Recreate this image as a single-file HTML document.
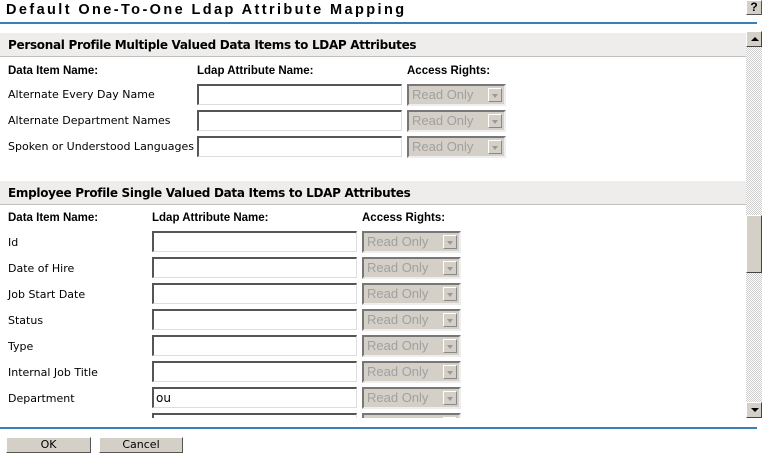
<!DOCTYPE html><html><head><style>
body{margin:0;width:762px;height:453px;background:#fff;position:relative;overflow:hidden;font-family:"DejaVu Sans","Liberation Sans",sans-serif;font-size:11px;color:#000}
.a{position:absolute}
.t{left:6px;top:2px;font:bold 14.5px "Liberation Sans",sans-serif;letter-spacing:2.4px}
.hl{height:2px;background:#3a80b8;left:0;width:757px}
.sh{left:0;width:746px;height:24px;background:#eeedeb;border-bottom:1px solid #c0c0c0;font-weight:bold;font-size:12px;letter-spacing:-0.3px;line-height:25px;padding-left:8px;box-sizing:border-box}
.lb{font:bold 11.5px "Liberation Sans",sans-serif}
.in{height:21px;width:205px;box-sizing:border-box;border:2px solid;border-top-color:#555;border-left-color:#555;border-right:1px solid #ddd;border-bottom:1px solid #ddd;background:#fff;padding-left:2px;line-height:18px;font-size:12px}
.se{height:22px;width:99px;box-sizing:border-box;background:#d4d0c8;border:2px solid;border-color:#777 #eee #eee #777;color:#a0a0a0;font:13px "Liberation Sans",sans-serif;line-height:18px;padding-left:3px}
.se i{position:absolute;right:2px;top:2px;width:14px;height:14px;background:#d4d0c8;border:1px solid;border-color:#fff #888 #888 #fff;box-sizing:border-box}
.se i:after{content:"";position:absolute;left:3px;top:5px;border:3px solid transparent;border-top:4px solid #999;border-bottom:0}
.btn{top:437px;height:16px;background:#d4d0c8;border:1px solid;border-color:#fff #555 #555 #fff;box-sizing:border-box;text-align:center;line-height:14px;font-size:11px}
</style></head><body>
<div class="a t">Default One-To-One Ldap Attribute Mapping</div>
<div class="a" style="left:746px;top:0;width:16px;height:15px;background:#d4d0c8;border:1px solid;border-color:#fff #555 #555 #fff;box-sizing:border-box;font:bold 12px 'Liberation Sans';text-align:center;line-height:13px">?</div>
<div class="a hl" style="top:22px"></div>
<div class="a" style="left:0;top:31px;width:746px;height:387px;overflow:hidden">
<div class="a sh" style="top:2px">Personal Profile Multiple Valued Data Items to LDAP Attributes</div>
<div class="a lb" style="left:8px;top:34px">Data Item Name:</div>
<div class="a lb" style="left:197px;top:34px">Ldap Attribute Name:</div>
<div class="a lb" style="left:407px;top:34px">Access Rights:</div>
<div class="a" style="left:8px;top:57px">Alternate Every Day Name</div>
<div class="a" style="left:8px;top:83px">Alternate Department Names</div>
<div class="a" style="left:8px;top:109px">Spoken or Understood Languages</div>
<div class="a in" style="left:197px;top:53px"></div><div class="a se" style="left:407px;top:53px">Read Only<i></i></div>
<div class="a in" style="left:197px;top:79px"></div><div class="a se" style="left:407px;top:79px">Read Only<i></i></div>
<div class="a in" style="left:197px;top:105px"></div><div class="a se" style="left:407px;top:105px">Read Only<i></i></div>
<div class="a sh" style="top:150px">Employee Profile Single Valued Data Items to LDAP Attributes</div>
<div class="a lb" style="left:8px;top:181px">Data Item Name:</div>
<div class="a lb" style="left:152px;top:181px">Ldap Attribute Name:</div>
<div class="a lb" style="left:362px;top:181px">Access Rights:</div>
<div class="a" style="left:8px;top:205px">Id</div>
<div class="a" style="left:8px;top:231px">Date of Hire</div>
<div class="a" style="left:8px;top:257px">Job Start Date</div>
<div class="a" style="left:8px;top:283px">Status</div>
<div class="a" style="left:8px;top:309px">Type</div>
<div class="a" style="left:8px;top:335px">Internal Job Title</div>
<div class="a" style="left:8px;top:361px">Department</div>
<div class="a in" style="left:152px;top:200px"></div><div class="a se" style="left:362px;top:200px">Read Only<i></i></div>
<div class="a in" style="left:152px;top:226px"></div><div class="a se" style="left:362px;top:226px">Read Only<i></i></div>
<div class="a in" style="left:152px;top:252px"></div><div class="a se" style="left:362px;top:252px">Read Only<i></i></div>
<div class="a in" style="left:152px;top:278px"></div><div class="a se" style="left:362px;top:278px">Read Only<i></i></div>
<div class="a in" style="left:152px;top:304px"></div><div class="a se" style="left:362px;top:304px">Read Only<i></i></div>
<div class="a in" style="left:152px;top:330px"></div><div class="a se" style="left:362px;top:330px">Read Only<i></i></div>
<div class="a in" style="left:152px;top:356px">ou</div><div class="a se" style="left:362px;top:356px">Read Only<i></i></div>
<div class="a in" style="left:152px;top:382px"></div><div class="a se" style="left:362px;top:382px">Read Only<i></i></div>
</div>
<div class="a" style="left:746px;top:31px;width:16px;height:387px;background:repeating-conic-gradient(#ccc 0 25%,#fff 0 50%) 0 0/2px 2px"></div>
<div class="a" style="left:746px;top:31px;width:16px;height:16px;background:#d4d0c8;border:1px solid;border-color:#fff #444 #444 #fff;box-sizing:border-box"><div class="a" style="left:4px;top:5px;border:4px solid transparent;border-bottom:4px solid #000;border-top:0"></div></div>
<div class="a" style="left:746px;top:215px;width:16px;height:58px;background:#d4d0c8;border:1px solid;border-color:#fff #444 #444 #fff;box-sizing:border-box"></div>
<div class="a" style="left:746px;top:402px;width:16px;height:16px;background:#d4d0c8;border:1px solid;border-color:#fff #444 #444 #fff;box-sizing:border-box"><div class="a" style="left:4px;top:5px;border:4px solid transparent;border-top:4px solid #000;border-bottom:0"></div></div>
<div class="a hl" style="top:427px"></div>
<div class="a btn" style="left:6px;width:85px">OK</div>
<div class="a btn" style="left:99px;width:84px">Cancel</div>
</body></html>
